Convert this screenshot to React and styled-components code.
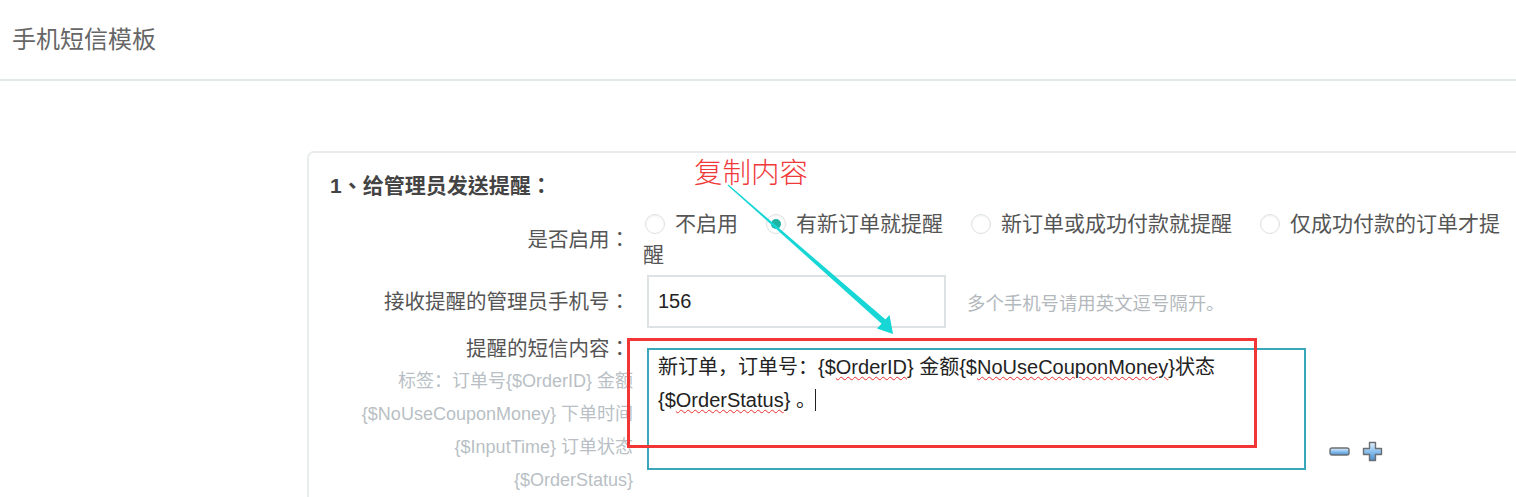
import React from 'react';
import styled, { createGlobalStyle } from 'styled-components';

const GlobalStyle = createGlobalStyle`
  html, body {
    margin: 0;
    padding: 0;
    background: #fff;
  }
  body {
    font-family: 'Liberation Sans', 'Noto Sans CJK SC', sans-serif;
    color: #555;
  }
`;

const Page = styled.div`
  position: relative;
  width: 1516px;
  height: 497px;
  overflow: hidden;
`;

const Header = styled.div`
  height: 79px;
  display: flex;
  align-items: center;
  padding: 0 12px;
  border-bottom: 2px solid #e3e8e9;
`;

const PageTitle = styled.h1`
  margin: 0;
  font-size: 24px;
  font-weight: normal;
  color: #666;
  line-height: 1;
`;

const Card = styled.div`
  margin: 70px 0 0 307px;
  width: 1260px;
  height: 400px;
  border: 2px solid #e8ecec;
  border-radius: 7px 0 0 0;
  padding: 21px 0 0 21px;
  box-sizing: border-box;
`;

const SectionTitle = styled.h3`
  margin: 0 0 10px;
  font-family: 'Liberation Sans', 'Noto Sans CJK TC', sans-serif;
  font-size: 21px;
  line-height: 24px;
  font-weight: bold;
  color: #444;
`;

const FormRow = styled.div`
  display: flex;
  align-items: flex-start;
  margin-top: ${p => p.$mt || 0}px;
`;

const Label = styled.div`
  width: 300px;
  flex: none;
  text-align: right;
  font-family: 'Liberation Sans', 'Noto Sans CJK TC', sans-serif;
  font-size: 20.5px;
  line-height: 33px;
  color: #555;
  padding-top: ${p => p.$pt || 0}px;
  white-space: nowrap;
`;

const HintLine = styled.div`
  font-family: 'Liberation Sans', 'Noto Sans CJK SC', sans-serif;
  font-size: 18px;
  line-height: 33px;
  color: #b9bfc5;
  margin-right: -3px;
`;

const Field = styled.div`
  margin-left: 13px;
  display: flex;
  align-items: ${p => p.$align || 'center'};
`;

const RadioGroup = styled.div`
  width: 862px;
  font-size: 21px;
  line-height: 31px;
  color: #555;
`;

const RadioOption = styled.label`
  margin-right: 26px;
`;

const RadioCircle = styled.span`
  display: inline-block;
  width: 18px;
  height: 18px;
  margin: 0 10px 0 2px;
  border: 1px solid #dde1e3;
  border-radius: 50%;
  box-shadow: inset 0 1px 2px rgba(0, 0, 0, 0.06);
  vertical-align: -3px;
  position: relative;

  &::after {
    content: '';
    display: ${p => (p.$checked ? 'block' : 'none')};
    position: absolute;
    left: 4px;
    top: 4px;
    width: 10px;
    height: 10px;
    border-radius: 50%;
    background: #1fb3a4;
  }
`;

const TextInput = styled.div`
  margin-left: 4px;
  width: 299px;
  height: 53px;
  box-sizing: border-box;
  border: 2px solid #dde2e4;
  padding: 0 9px;
  display: flex;
  align-items: center;
  font-size: 20px;
  color: #222;
`;

const HelpText = styled.span`
  margin-left: 21px;
  font-size: 18.4px;
  color: #b3b8bd;
`;

const TextArea = styled.div`
  margin: 16px 0 0 4px;
  width: 659px;
  height: 122px;
  box-sizing: border-box;
  border: 2px solid #3aa6b9;
  padding: 1px 40px 0 9px;
  font-size: 20px;
  line-height: 33px;
  color: #222;
`;

const Misspelled = styled.span`
  text-decoration: underline wavy #e8302c;
  text-decoration-thickness: 1px;
  text-underline-offset: 2px;
`;

const Caret = styled.span`
  display: inline-block;
  width: 0;
  height: 22px;
  margin-left: -1px;
  border-left: 1px solid #222;
  vertical-align: -4px;
`;

const Tools = styled.div`
  display: flex;
  align-items: center;
  gap: 12px;
  margin: 0 0 8px 23px;
`;

const Annotation = styled.div`
  position: absolute;
  left: 694px;
  top: 152px;
  font-family: 'Noto Sans CJK SC', sans-serif;
  font-size: 28.5px;
  line-height: 38px;
  font-weight: 300;
  color: #f03a3a;
`;

const RedBox = styled.div`
  position: absolute;
  left: 627px;
  top: 338px;
  width: 630px;
  height: 110px;
  box-sizing: border-box;
  border: 3px solid #f23535;
  pointer-events: none;
`;

const ArrowLayer = styled.svg`
  position: absolute;
  left: 0;
  top: 0;
  pointer-events: none;
`;

const MinusIcon = () => (
  <svg width="21" height="9" viewBox="0 0 21 9">
    <defs>
      <linearGradient id="mg" x1="0" y1="0" x2="0" y2="1">
        <stop offset="0" stopColor="#e4f1fc" />
        <stop offset="0.5" stopColor="#8cc1ef" />
        <stop offset="1" stopColor="#4b8fd0" />
      </linearGradient>
    </defs>
    <rect x="1" y="1" width="19" height="7" rx="2" fill="url(#mg)" stroke="#6b6f73" strokeWidth="1.4" />
  </svg>
);

const PlusIcon = () => (
  <svg width="21" height="21" viewBox="0 0 21 21">
    <defs>
      <linearGradient id="pg" x1="0" y1="0" x2="0" y2="1">
        <stop offset="0" stopColor="#e4f1fc" />
        <stop offset="0.5" stopColor="#8cc1ef" />
        <stop offset="1" stopColor="#4b8fd0" />
      </linearGradient>
    </defs>
    <path
      d="M7.5 1.5 h6 v6 h6 v6 h-6 v6 h-6 v-6 h-6 v-6 h6 z"
      fill="url(#pg)"
      stroke="#6b6f73"
      strokeWidth="1.4"
      strokeLinejoin="round"
    />
  </svg>
);

const radios = [
  { text: '不启用', checked: false },
  { text: '有新订单就提醒', checked: true },
  { text: '新订单或成功付款就提醒', checked: false },
  { text: '仅成功付款的订单才提醒', checked: false },
];

const App = () => {
  return (
    <Page>
      <GlobalStyle />
      <Header>
        <PageTitle>手机短信模板</PageTitle>
      </Header>
      <Card>
        <SectionTitle>1、给管理员发送提醒：</SectionTitle>
        <FormRow>
          <Label $pt={15}>是否启用：</Label>
          <Field>
            <RadioGroup>
              {radios.map(r => (
                <RadioOption key={r.text}>
                  <RadioCircle $checked={r.checked} />
                  {r.text}
                </RadioOption>
              ))}
            </RadioGroup>
          </Field>
        </FormRow>
        <FormRow $mt={5}>
          <Label $pt={10}>接收提醒的管理员手机号：</Label>
          <Field>
            <TextInput>156</TextInput>
            <HelpText>多个手机号请用英文逗号隔开。</HelpText>
          </Field>
        </FormRow>
        <FormRow $mt={4}>
          <Label>
            提醒的短信内容：
            <HintLine>标签：订单号{'{$OrderID}'} 金额</HintLine>
            <HintLine>{'{$NoUseCouponMoney}'} 下单时间</HintLine>
            <HintLine>{'{$InputTime}'} 订单状态</HintLine>
            <HintLine>{'{$OrderStatus}'}</HintLine>
          </Label>
          <Field $align="flex-end">
            <TextArea>
              新订单，订单号：{'{$'}<Misspelled>OrderID</Misspelled>{'}'} 金额{'{$'}
              <Misspelled>NoUseCouponMoney</Misspelled>{'}'}状态 {'{$'}
              <Misspelled>OrderStatus</Misspelled>{'}'} 。<Caret />
            </TextArea>
            <Tools>
              <MinusIcon />
              <PlusIcon />
            </Tools>
          </Field>
        </FormRow>
      </Card>

      <Annotation>复制内容</Annotation>
      <RedBox />
      <ArrowLayer width="1516" height="497">
        <polygon points="727.6,185.4 728.4,184.6 885.8,319.8 882.2,324.2" fill="#17d6d6" />
        <polygon points="893,334 877,328.5 889.5,315" fill="#17d6d6" />
      </ArrowLayer>
    </Page>
  );
};

export default App;
